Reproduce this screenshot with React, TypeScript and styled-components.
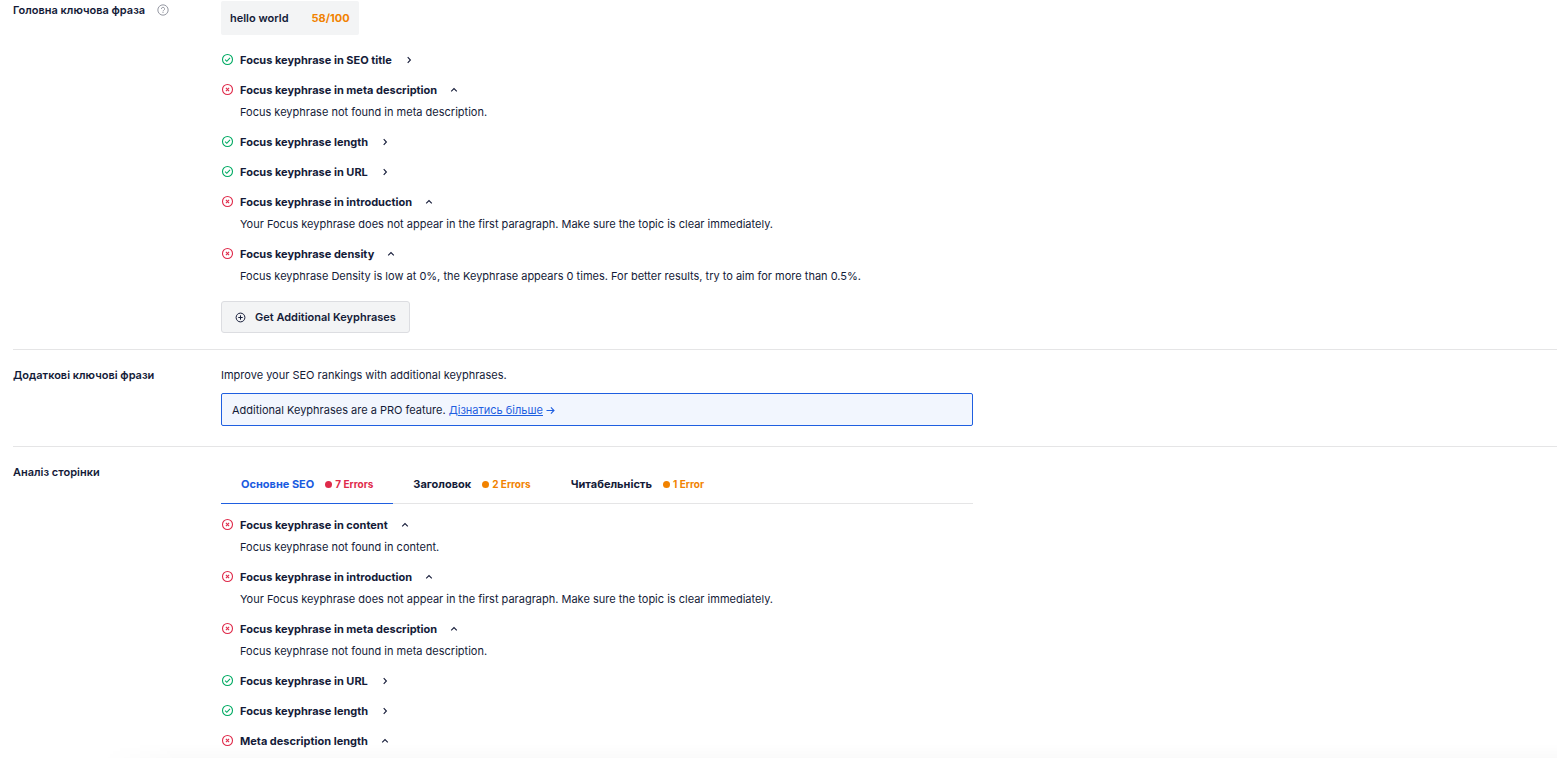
import React, { useState } from 'react';
import styled, { createGlobalStyle } from 'styled-components';

const colors = {
  text: '#141b38',
  muted: '#8c8f9a',
  blue: '#1a5be0',
  link: '#1f5fe0',
  green: '#00aa63',
  red: '#df2a4a',
  orange: '#f18200',
  line: '#e5e5e6',
};

const GlobalStyle = createGlobalStyle`
  * { box-sizing: border-box; }
  body {
    margin: 0;
    background: #fff;
    color: ${colors.text};
    font-family: Inter, "Noto Sans", sans-serif;
    font-size: 11px;
    line-height: 18px;
  }
  button { font: inherit; color: inherit; }
  p, h2, ul { margin: 0; padding: 0; }
`;

const Page = styled.main`
  padding: 1px 0 0 13px;
`;

const Section = styled.section<{ $first?: boolean; $bottom?: number }>`
  display: grid;
  grid-template-columns: 208px minmax(0, 1fr);
  padding: ${p => (p.$first ? 0 : 16)}px 0 ${p => p.$bottom ?? 16}px;
  & + & { border-top: 1px solid ${colors.line}; }
`;

const Label = styled.h2`
  display: flex;
  align-items: center;
  align-self: start;
  gap: 12px;
  font-size: 11px;
  font-weight: 600;
`;

const HelpButton = styled.button`
  display: flex;
  padding: 0;
  border: 0;
  background: none;
  color: ${colors.muted};
`;

const Content = styled.div<{ $gap: number }>`
  display: flex;
  flex-direction: column;
  align-items: flex-start;
  gap: ${p => p.$gap}px;
  width: 100%;
  max-width: 752px;
`;

const Chip = styled.button`
  display: flex;
  align-items: center;
  gap: 23px;
  height: 34px;
  padding: 0 9px;
  border: 0;
  border-radius: 2px;
  background: #f3f4f5;
  font-weight: 600;
`;

const Score = styled.span`
  color: ${colors.orange};
  font-weight: 700;
`;

const List = styled.ul`
  display: flex;
  flex-direction: column;
  gap: 12px;
  list-style: none;
`;

const Item = styled.li`
  display: grid;
  grid-template-columns: 13px auto;
  column-gap: 6px;
  row-gap: 4px;
  svg { display: block; }
`;

const StatusIcon = styled.span<{ $ok: boolean }>`
  padding-top: 2px;
  color: ${p => (p.$ok ? colors.green : colors.red)};
`;

const ItemTitle = styled.button`
  display: flex;
  align-items: center;
  justify-self: start;
  gap: 12px;
  height: 18px;
  padding: 0;
  border: 0;
  background: none;
  font-weight: 700;
`;

const Description = styled.p`
  grid-column: 2;
`;

const ActionButton = styled.button`
  display: flex;
  align-items: center;
  gap: 9px;
  height: 32px;
  padding: 0 13px;
  border: 1px solid #dcdde1;
  border-radius: 3px;
  background: #f3f4f5;
  font-weight: 600;
`;

const Notice = styled.div`
  width: 100%;
  height: 33px;
  padding: 7px 10px;
  border: 1px solid ${colors.link};
  border-radius: 2px;
  background: #f2f6fe;
`;

const Link = styled.a`
  color: ${colors.link};
  text-decoration: none;
  span { text-decoration: underline; }
  svg { margin-left: 3px; vertical-align: -1px; }
`;

const Tabs = styled.div`
  display: flex;
  width: 100%;
  height: 41px;
  border-bottom: 1px solid ${colors.line};
`;

const Tab = styled.button<{ $active: boolean }>`
  display: flex;
  align-items: center;
  gap: 11px;
  margin-bottom: -1px;
  padding: 2px 20px 0;
  border: 0;
  border-bottom: 1px solid ${p => (p.$active ? colors.link : 'transparent')};
  background: none;
  color: ${p => (p.$active ? colors.blue : colors.text)};
  font-weight: 700;
`;

const Errors = styled.span<{ $severe?: boolean }>`
  display: flex;
  align-items: center;
  gap: 3px;
  color: ${p => (p.$severe ? colors.red : colors.orange)};
  font-size: 10px;
  font-weight: 700;
  &::before {
    content: '';
    width: 7px;
    height: 7px;
    border-radius: 50%;
    background: currentColor;
  }
`;

const BottomShade = styled.div`
  position: fixed;
  right: 0;
  bottom: 0;
  left: 100px;
  height: 14px;
  background: linear-gradient(rgba(0, 0, 0, 0), rgba(0, 0, 0, 0.02));
  mask-image: linear-gradient(to right, transparent, #000 80px);
  pointer-events: none;
`;

const CheckIcon = () => (
  <svg width="13" height="13" viewBox="0 0 13 13" fill="none" stroke="currentColor" strokeWidth="1.1">
    <circle cx="6.5" cy="6.5" r="5" />
    <path d="M4.1 6.7l1.7 1.6 3.2-3.4" />
  </svg>
);

const CrossIcon = () => (
  <svg width="13" height="13" viewBox="0 0 13 13" fill="none" stroke="currentColor" strokeWidth="1.1">
    <circle cx="6.5" cy="6.5" r="5" />
    <path d="M4.9 4.9l3.2 3.2M8.1 4.9L4.9 8.1" />
  </svg>
);

const Chevron = ({ open }: { open: boolean }) => (
  <svg width="10" height="10" viewBox="0 0 10 10" fill="none" stroke="currentColor" strokeWidth="1.1">
    <path d={open ? 'M2.2 6.3L5 3.6l2.8 2.7' : 'M3.7 2.2L6.4 5 3.7 7.8'} />
  </svg>
);

const HelpIcon = () => (
  <svg width="12" height="12" viewBox="0 0 13 13" fill="none" stroke="currentColor">
    <circle cx="6.5" cy="6.5" r="5.6" />
    <path d="M4.8 5.3a1.7 1.7 0 1 1 2.5 1.5c-.6.3-.8.6-.8 1.2" />
    <path d="M6.5 8.7v1" />
  </svg>
);

const PlusIcon = () => (
  <svg width="11" height="11" viewBox="0 0 11 11" fill="none" stroke="currentColor">
    <circle cx="5.5" cy="5.5" r="4.4" />
    <path d="M5.5 3.3v4.4M3.3 5.5h4.4" />
  </svg>
);

const ArrowIcon = () => (
  <svg width="9" height="9" viewBox="0 0 9 9" fill="none" stroke="currentColor" strokeWidth="1.1">
    <path d="M.5 4.5h7.4M4.9 1.4L8 4.5 4.9 7.6" />
  </svg>
);

type Check = { title: string; ok: boolean; text?: string };

const inIntroduction: Check = {
  title: 'Focus keyphrase in introduction',
  ok: false,
  text: 'Your Focus keyphrase does not appear in the first paragraph. Make sure the topic is clear immediately.',
};
const inMeta: Check = {
  title: 'Focus keyphrase in meta description',
  ok: false,
  text: 'Focus keyphrase not found in meta description.',
};
const inUrl: Check = { title: 'Focus keyphrase in URL', ok: true };
const length: Check = { title: 'Focus keyphrase length', ok: true };

const keyphraseChecks: Check[] = [
  { title: 'Focus keyphrase in SEO title', ok: true },
  inMeta,
  length,
  inUrl,
  inIntroduction,
  {
    title: 'Focus keyphrase density',
    ok: false,
    text: 'Focus keyphrase Density is low at 0%, the Keyphrase appears 0 times. For better results, try to aim for more than 0.5%.',
  },
];

const pageChecks: Check[] = [
  { title: 'Focus keyphrase in content', ok: false, text: 'Focus keyphrase not found in content.' },
  inIntroduction,
  inMeta,
  inUrl,
  length,
  { title: 'Meta description length', ok: false },
];

const tabs = [
  { name: 'Основне SEO', errors: '7 Errors', severe: true },
  { name: 'Заголовок', errors: '2 Errors' },
  { name: 'Читабельність', errors: '1 Error' },
];

const CheckItem = ({ check }: { check: Check }) => {
  const [open, setOpen] = useState(!check.ok);
  return (
    <Item>
      <StatusIcon $ok={check.ok}>{check.ok ? <CheckIcon /> : <CrossIcon />}</StatusIcon>
      <ItemTitle type="button" aria-expanded={open} onClick={() => setOpen(!open)}>
        {check.title}
        <Chevron open={open} />
      </ItemTitle>
      {open && check.text && <Description>{check.text}</Description>}
    </Item>
  );
};

const CheckList = ({ checks }: { checks: Check[] }) => (
  <List>
    {checks.map(check => (
      <CheckItem key={check.title} check={check} />
    ))}
  </List>
);

export default function App() {
  const [active, setActive] = useState(0);
  return (
    <Page>
      <GlobalStyle />
      <Section $first>
        <Label>
          Головна ключова фраза
          <HelpButton type="button" aria-label="Довідка">
            <HelpIcon />
          </HelpButton>
        </Label>
        <Content $gap={16}>
          <Chip type="button">
            hello world <Score>58/100</Score>
          </Chip>
          <CheckList checks={keyphraseChecks} />
          <ActionButton type="button">
            <PlusIcon />
            Get Additional Keyphrases
          </ActionButton>
        </Content>
      </Section>
      <Section $bottom={20}>
        <Label>Додаткові ключові фрази</Label>
        <Content $gap={9}>
          <p>Improve your SEO rankings with additional keyphrases.</p>
          <Notice>
            Additional Keyphrases are a PRO feature.{' '}
            <Link href="#pro">
              <span>Дізнатись більше</span>
              <ArrowIcon />
            </Link>
          </Notice>
        </Content>
      </Section>
      <Section $bottom={0}>
        <Label>Аналіз сторінки</Label>
        <Content $gap={12}>
          <Tabs role="tablist">
            {tabs.map((tab, i) => (
              <Tab
                key={tab.name}
                type="button"
                role="tab"
                aria-selected={i === active}
                $active={i === active}
                onClick={() => setActive(i)}
              >
                {tab.name}
                <Errors $severe={tab.severe}>{tab.errors}</Errors>
              </Tab>
            ))}
          </Tabs>
          <CheckList checks={pageChecks} />
        </Content>
      </Section>
      <BottomShade />
    </Page>
  );
}
